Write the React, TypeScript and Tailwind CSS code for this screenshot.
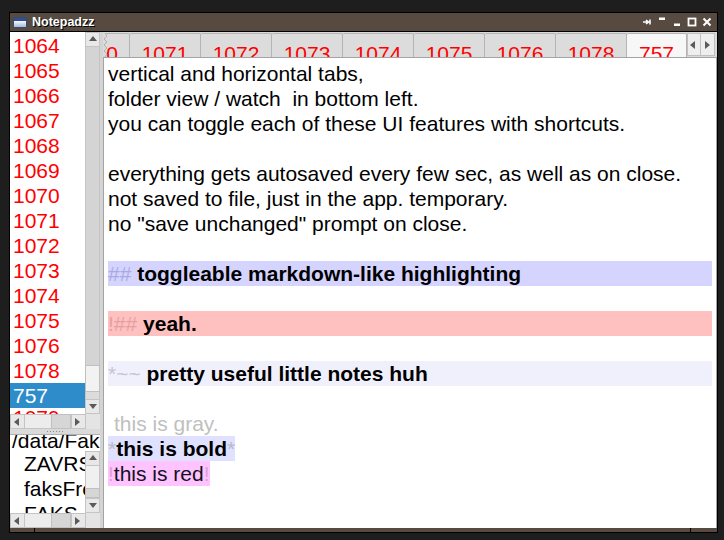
import React from "react";

const numbers = [
  "1064", "1065", "1066", "1067", "1068", "1069", "1070", "1071",
  "1072", "1073", "1074", "1075", "1076", "1078",
];
const tabs = ["1071", "1072", "1073", "1074", "1075", "1076", "1078"];
const files = ["ZAVRS", "faksFre", "FAKS"];

function Tri({ dir }: { dir: "up" | "down" | "left" | "right" }) {
  const pts = {
    up: "1,6 9,6 5,1",
    down: "1,2 9,2 5,7",
    left: "6,1 6,9 1,5",
    right: "2,1 2,9 7,5",
  }[dir];
  return (
    <svg width="10" height="10" viewBox="0 0 10 10">
      <polygon points={pts} fill="#5a5a5a" />
    </svg>
  );
}

function ScrollButton({ dir }: { dir: "up" | "down" | "left" | "right" }) {
  return (
    <div className="flex h-[15px] w-[15px] shrink-0 items-center justify-center border border-[#c4c4c4] bg-[#e8e8e8]">
      <Tri dir={dir} />
    </div>
  );
}

function HScroll() {
  return (
    <div className="flex h-[15px] shrink-0">
      <ScrollButton dir="left" />
      <div className="w-[27px] border-y border-[#c4c4c4] bg-[#ececec]" />
      <div className="w-[20px] border border-[#c0c0c0] bg-[#d6d6d6]" />
      <div className="flex-1 border-y border-[#c4c4c4] bg-[#ececec]" />
      <ScrollButton dir="right" />
      <div className="w-[15px] bg-[#e4e4e4]" />
    </div>
  );
}

export default function App() {
  return (
    <div className="h-[540px] w-[724px] overflow-hidden bg-[#1e1e1e] pl-[9px] pt-[12px] font-['Liberation_Sans',Arial,sans-serif]">
      <div className="flex h-[521px] w-[709px] flex-col border border-black bg-[#dadada]">
        {/* title bar */}
        <div className="flex h-[19px] shrink-0 items-center border-b border-black bg-[#574b41] pl-[3px] pr-[5px]">
          <div className="flex h-[11px] w-[14px] flex-col overflow-hidden border border-[#3a4a6a]">
            <div className="h-[3px] bg-[#2f4f8f]" />
            <div className="flex-1 bg-gradient-to-b from-[#f4f8ff] to-[#a8bcd8]" />
          </div>
          <span className="ml-[5px] text-[12.5px] font-bold text-white [text-shadow:1px_1px_0_#000]">
            Notepadzz
          </span>
          <div className="ml-auto flex items-center gap-[5px]">
            <svg width="10" height="10" viewBox="0 0 10 10">
              <path d="M1 5H6M4 3L6.5 5L4 7M8 2.5V7.5" stroke="#fff" strokeWidth="1.6" fill="none" />
            </svg>
            <svg width="10" height="10" viewBox="0 0 10 10">
              <rect x="2" y="0.5" width="6" height="2.5" fill="#fff" />
            </svg>
            <svg width="10" height="10" viewBox="0 0 10 10">
              <rect x="2" y="6.5" width="6" height="2.5" fill="#fff" />
            </svg>
            <svg width="10" height="10" viewBox="0 0 10 10">
              <rect x="1.5" y="1.5" width="7" height="7" stroke="#fff" strokeWidth="1.8" fill="none" />
            </svg>
            <svg width="10" height="10" viewBox="0 0 10 10">
              <path d="M1.5 1.5L8.5 8.5M8.5 1.5L1.5 8.5" stroke="#fff" strokeWidth="2" />
            </svg>
          </div>
        </div>

        {/* body */}
        <div className="flex h-[496px] shrink-0">
          {/* left panel */}
          <div className="flex w-[90px] shrink-0 flex-col">
            <div className="flex h-[382px] shrink-0">
              <div className="w-[75px] overflow-hidden bg-white pt-[1px] text-[21px] leading-[25px]">
                {numbers.map((n) => (
                  <div key={n} className="h-[25px] pl-[3px] text-[#ff0000]">
                    {n}
                  </div>
                ))}
                <div className="h-[25px] bg-[#2f8ccb] pl-[3px] text-white">757</div>
                <div className="-mt-[3px] h-[25px] pl-[3px] text-[#ff0000]">1079</div>
              </div>
              <div className="flex w-[15px] flex-col bg-[#d6d6d6]">
                <ScrollButton dir="up" />
                <div className="flex-1 border-x border-[#c4c4c4] bg-[#d4d4d4]" />
                <div className="h-[27px] border border-[#c0c0c0] bg-[#f2f2f2]" />
                <div className="h-[7px] border-x border-[#c4c4c4] bg-[#dcdcdc]" />
                <ScrollButton dir="down" />
              </div>
            </div>
            <HScroll />
            <div className="flex h-[5px] shrink-0 items-center justify-center gap-[2px] bg-[#dadada]">
              {Array.from({ length: 6 }, (_, i) => (
                <div key={i} className="h-[1px] w-[1px] bg-[#8a8a8a]" />
              ))}
            </div>
            <div className="h-[17px] shrink-0 overflow-hidden whitespace-nowrap border-t border-[#b0b0b0] bg-white pl-[2px] text-[21px] leading-[12px] text-black">
              /data/Fakultet
            </div>
            <div className="flex h-[62px] shrink-0">
              <div className="w-[75px] overflow-hidden whitespace-nowrap bg-white text-[21px] leading-[25px] text-black">
                {files.map((f) => (
                  <div key={f} className="h-[25px] pl-[14px]">
                    {f}
                  </div>
                ))}
              </div>
              <div className="flex w-[15px] flex-col">
                <ScrollButton dir="up" />
                <div className="flex-1 border-x border-[#c4c4c4] bg-[#f0f0f0]" />
                <div className="h-[10px] border border-[#c0c0c0] bg-[#d6d6d6]" />
                <ScrollButton dir="down" />
              </div>
            </div>
            <HScroll />
          </div>

          {/* splitter */}
          <div className="w-[3px] shrink-0 bg-[#d4d4d4]" />

          {/* right panel */}
          <div className="flex w-[614px] shrink-0 flex-col">
            <div className="relative flex h-[25px] shrink-0 overflow-hidden pt-[1px]">
              <div className="ml-[-44px] h-[24px] w-[71px] shrink-0 overflow-hidden rounded-t-[2px] border border-b-0 border-[#b4b4b4] bg-[#dcdcdc] pt-[9px] text-center text-[21px] leading-[21px] text-[#ff0000]">
                1070
              </div>
              <svg className="absolute left-0 top-[1px]" width="5" height="24" viewBox="0 0 5 24">
                <path d="M0 0H2L4 3L1 6L4 9L1 12L4 15L1 18L4 21L2 24H0Z" fill="#dadada" />
                <path d="M2 0L4 3L1 6L4 9L1 12L4 15L1 18L4 21L2 24" stroke="#b0b0b0" fill="none" />
              </svg>
              {tabs.map((t) => (
                <div
                  key={t}
                  className="h-[24px] w-[71px] shrink-0 overflow-hidden rounded-t-[2px] border border-b-0 border-l-0 border-[#b4b4b4] bg-[#dcdcdc] pt-[9px] text-center text-[21px] leading-[21px] text-[#ff0000]"
                >
                  {t}
                </div>
              ))}
              <div className="h-[24px] w-[60px] shrink-0 overflow-hidden rounded-t-[2px] border border-b-0 border-l-0 border-[#b4b4b4] bg-[#f7f7f7] pt-[9px] text-center text-[21px] leading-[21px] text-[#ff0000]">
                757
              </div>
              <div className="flex h-[23px] w-[14px] shrink-0 items-center justify-center border border-[#c0c0c0] bg-[#eeeeee]">
                <Tri dir="left" />
              </div>
              <div className="flex h-[23px] w-[14px] shrink-0 items-center justify-center border border-l-0 border-[#c0c0c0] bg-[#eeeeee]">
                <Tri dir="right" />
              </div>
            </div>

            <div className="flex-1 overflow-hidden whitespace-pre border-x border-t border-[#a4a4a4] bg-white px-[4px] pt-[3px] text-[21px] leading-[25px] text-black">
              <div className="h-[25px]">vertical and horizontal tabs,</div>
              <div className="h-[25px]">folder view / watch  in bottom left.</div>
              <div className="h-[25px]">you can toggle each of these UI features with shortcuts.</div>
              <div className="h-[25px]" />
              <div className="h-[25px]">everything gets autosaved every few sec, as well as on close.</div>
              <div className="h-[25px]">not saved to file, just in the app. temporary.</div>
              <div className="h-[25px]">no "save unchanged" prompt on close.</div>
              <div className="h-[25px]" />
              <div className="h-[25px] bg-[#d4d4ff] font-bold">
                <span className="font-normal text-[#aaaae2]">##</span> toggleable markdown-like highlighting
              </div>
              <div className="h-[25px]" />
              <div className="h-[25px] bg-[#ffc0c0] font-bold">
                <span className="font-normal text-[#e6a0a0]">!##</span> yeah.
              </div>
              <div className="h-[25px]" />
              <div className="h-[25px] bg-[#f0f0fc] font-bold">
                <span className="font-normal text-[#c4c4d8]">*~~</span> pretty useful little notes huh
              </div>
              <div className="h-[25px]" />
              <div className="h-[25px] pl-[6px] text-[#c0c0c0]">this is gray.</div>
              <div className="h-[25px] w-fit bg-[#e0e0ff]">
                <span className="text-[#b8b8c8]">*</span>
                <span className="font-bold">this is bold</span>
                <span className="text-[#b8b8c8]">*</span>
              </div>
              <div className="h-[25px] w-fit bg-[#ffc4ff] text-[#12121e]">
                <span className="text-[#e0a0d8]">!</span>this is red<span className="text-[#e0a0d8]">!</span>
              </div>
            </div>
          </div>
        </div>

        {/* bottom strip */}
        <div className="flex h-[4px] shrink-0 bg-[#574b41]">
          <div className="w-[25px] border-r border-black" />
          <div className="w-[656px] border-r border-black" />
        </div>
      </div>
    </div>
  );
}
